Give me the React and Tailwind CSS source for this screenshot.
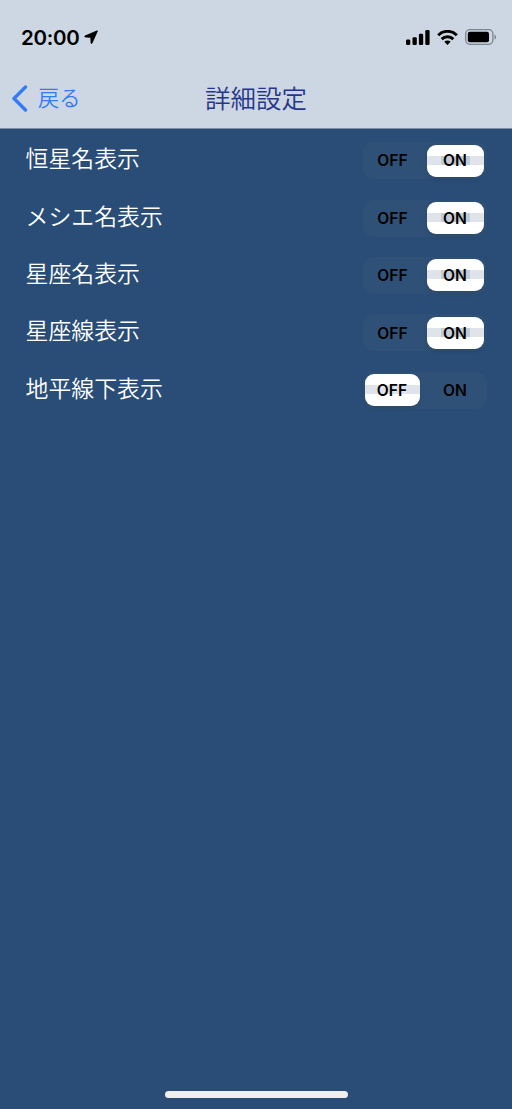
const settings = [
  { label: "恒星名表示", on: true },
  { label: "メシエ名表示", on: true },
  { label: "星座名表示", on: true },
  { label: "星座線表示", on: true },
  { label: "地平線下表示", on: false },
];

function StatusBar() {
  return (
    <div className="flex h-[74px] items-center pl-[21px] pr-[15px] text-black">
      <span className="pt-px font-['Inter'] text-[20.5px] font-semibold leading-6 tracking-[-0.25px]">20:00</span>
      <svg className="ml-[4px]" width="14" height="14" viewBox="0 0 14 14">
        <path
          d="M13 .9 1 6q-.7.5.2.9l5.6.4.3 5.8q.2.8.8.2L13.4 1.1q.1-.4-.4-.2Z"
          fill="currentColor"
          stroke="currentColor"
          strokeWidth=".9"
          strokeLinejoin="round"
        />
      </svg>
      <svg className="ml-auto" width="24" height="15" viewBox="0 0 24 15" fill="currentColor">
        <rect x="0" y="9.5" width="4.3" height="5.5" rx="1.2" />
        <rect x="6.5" y="7.3" width="4.3" height="7.7" rx="1.2" />
        <rect x="12.9" y="3.8" width="4.3" height="11.2" rx="1.2" />
        <rect x="19.3" y="0" width="4.3" height="15" rx="1.2" />
      </svg>
      <svg className="ml-[7px]" width="21" height="15" viewBox="0 0 21 15" fill="none" stroke="currentColor" strokeWidth="3">
        <path d="M1.2 5.2a13.2 13.2 0 0 1 18.6 0" />
        <path d="M4.7 9.1a8.2 8.2 0 0 1 11.6 0" />
        <path d="m10.5 15-3.2-3.2a4.6 4.6 0 0 1 6.4 0Z" fill="currentColor" stroke="none" />
      </svg>
      <svg className="ml-[7px]" width="32" height="16" viewBox="0 0 32 16">
        <rect x=".7" y=".7" width="27.2" height="14.6" rx="4.2" fill="none" stroke="#7c848d" strokeWidth="1.3" />
        <rect x="2.8" y="2.8" width="21.2" height="10.4" rx="2" fill="currentColor" />
        <path d="M29.5 5.4c2 .9 2 4.3 0 5.2Z" fill="#7c848d" />
      </svg>
    </div>
  );
}

function NavBar() {
  return (
    <div className="grid h-[55px] grid-cols-[1fr_auto_1fr] items-center border-b border-[#7c8ea5] pb-[6px]">
      <button className="flex items-center pl-[12px] text-[#347bf6]">
        <svg width="16" height="27" viewBox="0 0 16 27" fill="none" stroke="currentColor" strokeWidth="3.4" strokeLinecap="round" strokeLinejoin="round">
          <path d="M13.5 2 2 13.5l11.5 11.5" />
        </svg>
        <span className="ml-[10px] pb-[2px] text-[21.2px] font-[350] leading-8">戻る</span>
      </button>
      <h1 className="pb-[2px] text-[25.5px] font-[350] leading-9 text-[#26378b]">詳細設定</h1>
    </div>
  );
}

function Segment({ label, active }) {
  return (
    <span
      className={`relative flex h-8 items-center justify-center overflow-hidden rounded-[9px] ${
        active ? "bg-white shadow-[0_2px_5px_rgba(0,0,0,0.12)]" : ""
      }`}
    >
      {active && (
        <span className="absolute inset-x-0 top-[11px] flex h-[9px] justify-center bg-[#dfe4ea]">
          {label === "ON" && <span className="w-[29px] bg-[#c3ccd6]" />}
        </span>
      )}
      <span className="relative pt-px">{label}</span>
    </span>
  );
}

function Toggle({ on }) {
  return (
    <div
      className={`grid h-[37px] w-[124px] gap-[7px] rounded-[11px] bg-[#305177] py-[2.5px] font-['Inter'] text-[15.6px] font-semibold text-black ${
        on ? "grid-cols-[54px_57px] px-[3px]" : "grid-cols-[55px_57px] pl-[2px] pr-[3px]"
      }`}
    >
      <Segment label="OFF" active={!on} />
      <Segment label="ON" active={on} />
    </div>
  );
}

export default function App() {
  return (
    <div className="flex h-[1109px] w-[512px] flex-col overflow-hidden bg-[#294d76] font-['Noto_Sans_CJK_JP',sans-serif]">
      <header className="h-[129px] bg-[#cdd7e3]">
        <StatusBar />
        <NavBar />
      </header>
      <main className="flex-1 pt-[3px]">
        {settings.map(({ label, on }) => (
          <div key={label} className="flex h-[57.4px] items-center justify-between pl-[25.5px] pr-[25.5px]">
            <span className="pb-[7px] text-[22.9px] font-[350] leading-8 text-white">{label}</span>
            <Toggle on={on} />
          </div>
        ))}
      </main>
      <div className="mx-auto mb-[11px] h-[7px] w-[183px] rounded-full bg-[#efefef]" />
    </div>
  );
}
